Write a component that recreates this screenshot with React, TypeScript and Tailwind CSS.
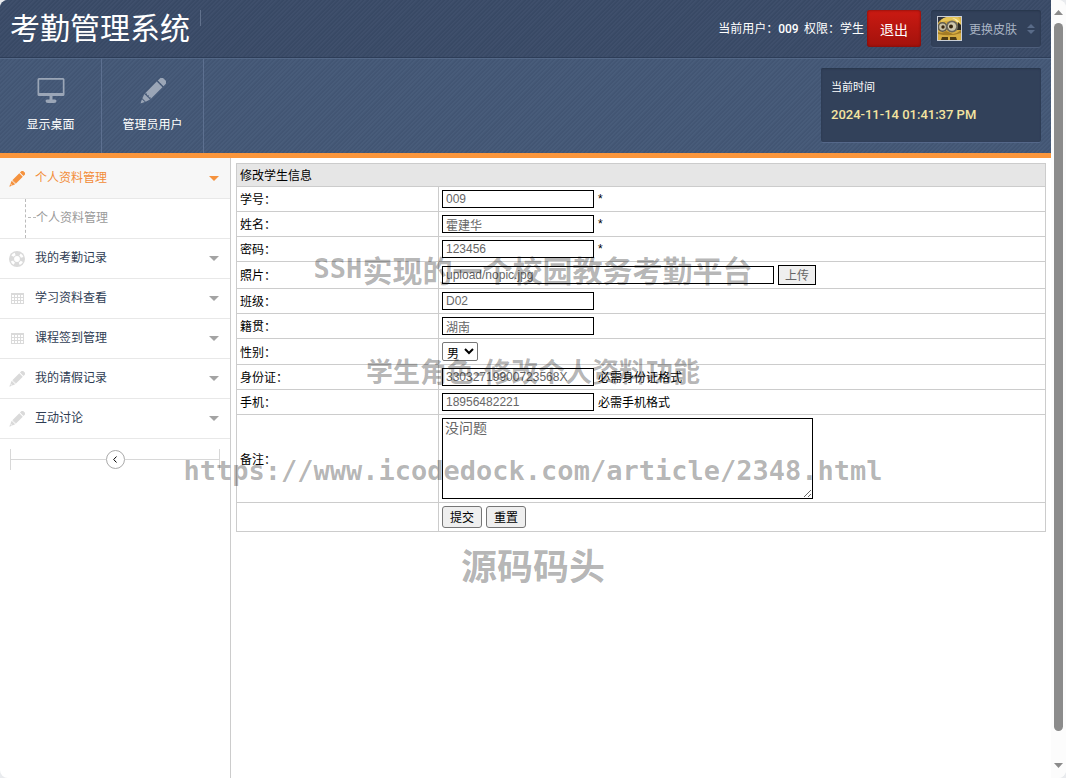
import { useState } from "react";
import type { ReactNode } from "react";

interface MenuItem
{
    id: number;
    title: string;
    icon: "pencil" | "ring" | "grid";
    children?: string[];
}

interface RowProps
{
    label: string;
    htmlFor?: string;
    height: string;
    children: ReactNode;
}

const menuItems: MenuItem[] = [
    { id: 1, title: "个人资料管理", icon: "pencil", children: ["个人资料管理"] },
    { id: 2, title: "我的考勤记录", icon: "ring" },
    { id: 3, title: "学习资料查看", icon: "grid" },
    { id: 4, title: "课程签到管理", icon: "grid" },
    { id: 5, title: "我的请假记录", icon: "pencil" },
    { id: 6, title: "互动讨论", icon: "pencil" },
];

const inputStyle = "block h-[18px] border border-black bg-white px-[3px] font-['Liberation_Sans','Noto_Sans_CJK_SC',sans-serif] text-xs text-[#666]";

function PencilIcon({ className }: { className: string })
{
    return (
        <svg className={className} viewBox="0 0 26 26" fill="currentColor">
            <g transform="translate(0.5 25.5) rotate(-45)">
                <path d="M0 0 L4 -2 V2 Z" />
                <path d="M5 -2.4 L9.5 -4 V4 L5 2.4 Z" />
                <path d="M10.3 -4 H27 V4 H10.3 L11.6 2.6 L10.3 1.3 L11.6 0 L10.3 -1.3 L11.6 -2.6 Z" />
                <path d="M28.5 -4 H31.5 Q34 -4 34 -1.5 V1.5 Q34 4 31.5 4 H28.5 Z" />
            </g>
        </svg>
    );
}

function MonitorIcon()
{
    return (
        <svg className="h-[26px] w-7" viewBox="0 0 28 26" fill="currentColor">
            <path fillRule="evenodd" d="M2 0 H26 Q27.500 0 27.500 1.500 V16.500 Q27.500 18 26 18 H2 Q0.500 18 0.500 16.500 V1.500 Q0.500 0 2 0 Z M2.200 1.800 V15 H25.800 V1.800 Z" />
            <path d="M12.500 18 H15.500 V21.500 H18 Q19.500 21.500 19.500 23 Q19.500 25 17 25 H11 Q8.500 25 8.500 23 Q8.500 21.500 10 21.500 H12.500 Z" />
        </svg>
    );
}

function RingIcon()
{
    return (
        <svg className="size-4" viewBox="0 0 16 16">
            <circle cx="8" cy="8" r="8" fill="currentColor" />
            <circle cx="8" cy="8" r="2.900" fill="#fff" />
            <circle cx="8" cy="8" r="5.400" fill="none" stroke="#fff" strokeWidth="2.600" strokeDasharray="3.400 5.082" strokeDashoffset="-2.540" />
        </svg>
    );
}

function GridIcon()
{
    return (
        <svg className="h-[11px] w-[13px]" viewBox="0 0 13 11" stroke="currentColor" shapeRendering="crispEdges">
            <path d="M0 .5H13 M0 1.500H13 M0 4.500H13 M0 7.500H13 M0 10.500H13 M.5 0V11 M3.500 0V11 M6.500 0V11 M9.500 0V11 M12.500 0V11" />
        </svg>
    );
}

function SkinPicture()
{
    return (
        <svg className="size-[25px] border border-[#c9ced6]" viewBox="0 0 23 23">
            <rect width="23" height="23" fill="#d6ad42" />
            <path d="M0 0H11Q3 1 0 6Z" fill="#2f3340" />
            <path d="M3 3Q7 -1 13 0H20Q23 3 23 8L17 4Q9 3 3 5Z" fill="#e6c558" />
            <path d="M14 1Q19 1 22 6L19 5Q17 2 14 1Z" fill="#f9e9a6" />
            <path d="M20 5L23 8V13H19Z" fill="#2c2a24" />
            <circle cx="4.500" cy="10" r="5" fill="#5f5b4f" />
            <circle cx="4.500" cy="10" r="3.400" fill="#c9c1a4" />
            <circle cx="5" cy="10" r="1.700" fill="#35250f" />
            <circle cx="14" cy="9.500" r="6" fill="#6b675c" />
            <circle cx="14" cy="9.500" r="4.200" fill="#cfc8ae" />
            <circle cx="13" cy="9.500" r="2" fill="#35250f" />
            <path d="M0 15Q4 17 8 14L15 17Q20 16 23 13V16Q12 20 0 17Z" fill="#a37c26" />
            <path d="M4 20H10V23H3Z M12 20H18L19 23H12Z" fill="#4d3c15" />
        </svg>
    );
}

function Row({ label, htmlFor, height, children }: RowProps)
{
    return (
        <tr className={height}>
            <td className="border border-[#ccc] px-[3px] py-0">
                {label && <label htmlFor={htmlFor}>{label}</label>}
            </td>
            <td className="border border-[#ccc] px-[3px] py-0">
                <div className="flex items-center gap-1">{children}</div>
            </td>
        </tr>
    );
}

function Header()
{
    return (
        <header className="border-b-[5px] border-[#fb963b] bg-[#445877] text-white">
            <div className="flex h-[58px] items-start justify-between border-b border-[#2d3d58] bg-[#3a4b68] bg-[repeating-linear-gradient(135deg,#ffffff06_0px,#ffffff06_1px,#00000008_2px,#00000008_3px)] px-[10px] pt-[10px]">
                <div className="flex">
                    <h1 className="text-[30px] leading-8">考勤管理系统</h1>
                    <span className="ml-[10px] h-4 w-px bg-[#61718c]" />
                </div>
                <div className="flex items-center">
                    <span className="mr-[3px] text-xs whitespace-pre">
                        当前用户：<b className="font-['Roboto',sans-serif] font-medium">009</b>  权限：学生
                    </span>
                    <button type="button" className="h-[37px] w-[54px] rounded-[3px] bg-linear-to-b from-[#cb1a12] to-[#a3120c] text-sm shadow-[inset_0_0_3px_#6d0d0a]">
                        退出
                    </button>
                    <button type="button" className="ml-[10px] flex h-[37px] w-[110px] items-center rounded-[3px] bg-[#32415a] pl-[6px] text-xs text-[#a9b4c4] shadow-[inset_0_1px_2px_#27354b,0_1px_0_#4d5e7b]">
                        <SkinPicture />
                        <span className="ml-[7px]">更换皮肤</span>
                        <svg className="ml-[10px] h-[10px] w-2" viewBox="0 0 8 10" fill="#596b88">
                            <path d="M0 4L4 0L8 4Z M0 6L4 10L8 6Z" />
                        </svg>
                    </button>
                </div>
            </div>

            <div className="flex h-[95px] justify-between border-t border-[#536786] bg-[repeating-linear-gradient(135deg,#ffffff06_0px,#ffffff06_1px,#00000008_2px,#00000008_3px)] pr-[10px]">
                <nav className="flex text-xs">
                    <a href="#desktop" className="flex w-[102px] flex-col items-center gap-3 border-r border-[#5d7090] pt-[19px]">
                        <span className="text-[#9ba6b7]"><MonitorIcon /></span>
                        显示桌面
                    </a>
                    <a href="#admin" className="flex w-[102px] flex-col items-center gap-3 border-r border-[#5d7090] pt-[19px]">
                        <span className="text-[#9ba6b7]"><PencilIcon className="size-[26px]" /></span>
                        管理员用户
                    </a>
                </nav>
                <div className="mt-[9px] h-[74px] w-[220px] rounded-[2px] bg-[#32415a] px-[10px] pt-[10px] shadow-[inset_0_1px_2px_#27354b,0_1px_0_#55688a]">
                    <p className="text-[11px] leading-4">当前时间</p>
                    <p className="mt-3 font-['Roboto',sans-serif] text-[13px] leading-[18px] font-medium text-[#f4e4a0]">2024-11-14 01:41:37 PM</p>
                </div>
            </div>
        </header>
    );
}

function Sidebar()
{
    const [openId, setOpenId] = useState<number>(1);

    return (
        <aside className="w-[231px] shrink-0 border-r border-[#ccc]">
            <ul className="border-t border-[#f7f7f7]">
                {menuItems.map((item) => {
                    const isOpen = item.id === openId;
                    return (
                        <li key={item.id}>
                            <button
                                type="button"
                                onClick={() => setOpenId(item.id)}
                                className={`${isOpen ? "bg-[#f7f7f7] text-[#f28c38]" : "text-[#2f3d54]"} flex h-10 w-full items-center border-b border-[#e8e8e8] pr-[11px] pl-[9px] text-left text-xs`}
                            >
                                <span className={`${isOpen ? "text-[#f5923e]" : "text-[#dadada]"} flex w-4 justify-center`}>
                                    {item.icon === "pencil" && <PencilIcon className="size-4" />}
                                    {item.icon === "ring" && <RingIcon />}
                                    {item.icon === "grid" && <GridIcon />}
                                </span>
                                <span className="mb-[3px] ml-[10px] flex-1">{item.title}</span>
                                <svg className={`${isOpen ? "text-[#f5923e]" : "text-[#a3a3a3]"} h-[5px] w-[10px]`} viewBox="0 0 10 5" fill="currentColor">
                                    <path d="M0 0H10L5 5Z" />
                                </svg>
                            </button>
                            {isOpen && item.children && item.children.map((child) => (
                                <div key={child} className="flex h-10 border-b border-[#e8e8e8] pl-[25px] text-xs text-[#999]">
                                    <span className="h-full border-l border-dashed border-[#bbb]" />
                                    <a href="#profile" className="flex items-center pb-[3px]">
                                        <span className="h-px w-[10px] bg-[repeating-linear-gradient(90deg,transparent_0px,transparent_2px,#bbb_2px,#bbb_5px)]" />
                                        {child}
                                    </a>
                                </div>
                            ))}
                        </li>
                    );
                })}
            </ul>
            <div className="mx-[10px] mt-[10px] flex h-[21px] items-center border-x border-[#d8d8d8]">
                <span className="h-px flex-1 bg-[#d8d8d8]" />
                <button type="button" aria-label="收起" className="flex size-[19px] items-center justify-center rounded-full border border-[#aaa] bg-white">
                    <svg className="h-[7px] w-1" viewBox="0 0 4 7" fill="none" stroke="#000">
                        <path d="M3.500 .5L.7 3.500L3.500 6.500" />
                    </svg>
                </button>
                <span className="h-px flex-1 bg-[#d8d8d8]" />
            </div>
        </aside>
    );
}

function StudentForm()
{
    const [formData, setFormData] = useState({
        number: "009",
        name: "霍建华",
        password: "123456",
        photo: "upload/nopic.jpg",
        className: "D02",
        hometown: "湖南",
        gender: "男",
        idCard: "33032719900723568X",
        phone: "18956482221",
        remark: "没问题",
    });

    function update(key: string, value: string)
    {
        setFormData({ ...formData, [key]: value });
    }

    return (
        <form className="min-w-0 flex-1 p-[5px]" onSubmit={(e) => e.preventDefault()}>
            <table className="w-full table-fixed border-collapse text-xs text-black">
                <colgroup>
                    <col className="w-[202px]" />
                    <col />
                </colgroup>
                <tbody>
                    <tr className="h-[23px]">
                        <th colSpan={2} className="border border-[#ccc] bg-[#e6e6e6] px-[3px] py-0 text-left font-normal">修改学生信息</th>
                    </tr>
                    <Row label="学号：" htmlFor="number" height="h-[25px]">
                        <input id="number" className={`${inputStyle} w-[152px]`} value={formData.number} onChange={(e) => update("number", e.target.value)} />
                        <span className="font-['Liberation_Sans',sans-serif]">*</span>
                    </Row>
                    <Row label="姓名：" htmlFor="name" height="h-[25px]">
                        <input id="name" className={`${inputStyle} w-[152px]`} value={formData.name} onChange={(e) => update("name", e.target.value)} />
                        <span className="font-['Liberation_Sans',sans-serif]">*</span>
                    </Row>
                    <Row label="密码：" htmlFor="password" height="h-[25px]">
                        <input id="password" className={`${inputStyle} w-[152px]`} value={formData.password} onChange={(e) => update("password", e.target.value)} />
                        <span className="font-['Liberation_Sans',sans-serif]">*</span>
                    </Row>
                    <Row label="照片：" htmlFor="photo" height="h-[27px]">
                        <input id="photo" className={`${inputStyle} w-[332px]`} value={formData.photo} onChange={(e) => update("photo", e.target.value)} />
                        <button type="button" className="h-5 w-[38px] border border-black bg-[#efefef] text-[#666]">上传</button>
                    </Row>
                    <Row label="班级：" htmlFor="className" height="h-[25px]">
                        <input id="className" className={`${inputStyle} w-[152px]`} value={formData.className} onChange={(e) => update("className", e.target.value)} />
                    </Row>
                    <Row label="籍贯：" htmlFor="hometown" height="h-[25px]">
                        <input id="hometown" className={`${inputStyle} w-[152px]`} value={formData.hometown} onChange={(e) => update("hometown", e.target.value)} />
                    </Row>
                    <Row label="性别：" htmlFor="gender" height="h-[26px]">
                        <select id="gender" className="h-[19px] w-9 rounded-[2px] border border-[#767676] bg-white text-xs leading-4" value={formData.gender} onChange={(e) => update("gender", e.target.value)}>
                            <option>男</option>
                            <option>女</option>
                        </select>
                    </Row>
                    <Row label="身份证：" htmlFor="idCard" height="h-[25px]">
                        <input id="idCard" className={`${inputStyle} w-[152px]`} value={formData.idCard} onChange={(e) => update("idCard", e.target.value)} />
                        <span>必需身份证格式</span>
                    </Row>
                    <Row label="手机：" htmlFor="phone" height="h-[25px]">
                        <input id="phone" className={`${inputStyle} w-[152px]`} value={formData.phone} onChange={(e) => update("phone", e.target.value)} />
                        <span>必需手机格式</span>
                    </Row>
                    <Row label="备注：" htmlFor="remark" height="h-[88px]">
                        <textarea id="remark" className="block h-[81px] w-[371px] border border-black bg-white px-[2px] text-sm leading-4 text-[#666]" value={formData.remark} onChange={(e) => update("remark", e.target.value)} />
                    </Row>
                    <Row label="" height="h-[29px]">
                        <button type="submit" className="h-[22px] w-10 rounded-[3px] border border-[#767676] bg-[#efefef]">提交</button>
                        <button type="reset" className="h-[22px] w-10 rounded-[3px] border border-[#767676] bg-[#efefef]">重置</button>
                    </Row>
                </tbody>
            </table>
        </form>
    );
}

function Watermark()
{
    return (
        <div className="pointer-events-none absolute inset-x-0 top-[219px] text-center font-bold text-black/30">
            <p className="flex h-[100px] items-center justify-center text-[30px]">
                <span className="font-['DejaVu_Sans_Mono',monospace] text-[27px]">SSH</span>实现的一个校园教务考勤平台
            </p>
            <p className="flex h-[104px] items-center justify-center text-[27px]">学生角色-修改个人资料功能</p>
            <p className="flex h-24 items-center justify-center font-['DejaVu_Sans_Mono',monospace] text-[27px]">https://www.icodedock.com/article/2348.html</p>
            <p className="flex h-[90px] items-center justify-center text-4xl">源码码头</p>
        </div>
    );
}

function ScrollTrack()
{
    return (
        <div className="flex h-screen w-[15px] shrink-0 flex-col items-center bg-[#fcfcfc] pt-[10px] pb-[10px] text-[#8b8b8b]">
            <svg className="h-[5px] w-[9px]" viewBox="0 0 9 5" fill="currentColor"><path d="M0 5L4.500 0L9 5Z" /></svg>
            <div className="mt-2 mb-8 w-[9px] flex-1 rounded-full bg-[#8b8b8b]" />
            <svg className="h-[5px] w-[9px]" viewBox="0 0 9 5" fill="currentColor"><path d="M0 0L4.500 5L9 0Z" /></svg>
        </div>
    );
}

export default function App()
{
    return (
        <div className="bg-[#e9ebee]">
            <div className="relative flex min-h-screen overflow-hidden rounded-lg bg-white font-['Noto_Sans_CJK_SC',sans-serif]">
                <div className="flex min-w-0 flex-1 flex-col">
                    <Header />
                    <main className="flex flex-1">
                        <Sidebar />
                        <StudentForm />
                    </main>
                </div>
                <ScrollTrack />
                <Watermark />
            </div>
        </div>
    );
}
